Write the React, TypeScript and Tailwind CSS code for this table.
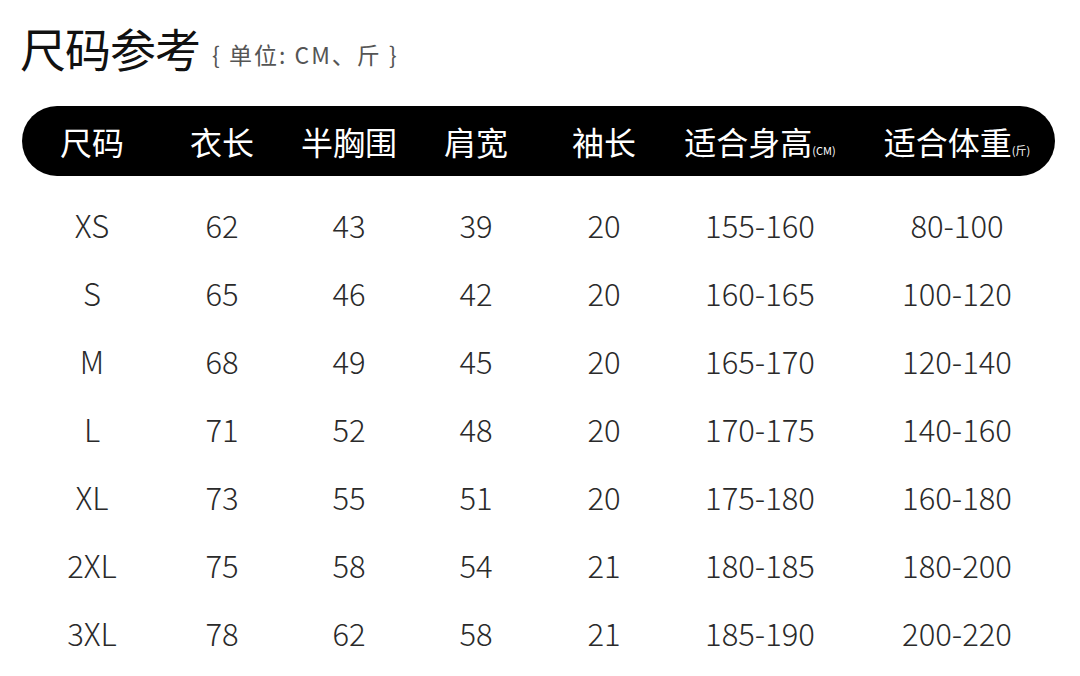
import React from 'react';

const FONT = "font-['Noto_Sans_CJK_SC','Noto_Sans',sans-serif]";

const rows: string[][] = [
  ['XS', '62', '43', '39', '20', '155-160', '80-100'],
  ['S', '65', '46', '42', '20', '160-165', '100-120'],
  ['M', '68', '49', '45', '20', '165-170', '120-140'],
  ['L', '71', '52', '48', '20', '170-175', '140-160'],
  ['XL', '73', '55', '51', '20', '175-180', '160-180'],
  ['2XL', '75', '58', '54', '21', '180-185', '180-200'],
  ['3XL', '78', '62', '58', '21', '185-190', '200-220'],
];

// column widths picked so the centres land where the reference has them
const COLS = 'grid grid-cols-[140px_120px_134px_120px_136px_176px_218px]';

const App: React.FC = () => {
  return (
    <div className={`w-[1080px] h-[676px] bg-white overflow-hidden ${FONT}`}>
      {/* Title */}
      <div className="flex items-end pl-[20px] pt-[12px] h-[76px]">
        <h1 className="text-[46px] leading-none text-[#111] tracking-[-1px] mb-[6px]">尺码参考</h1>
        <span className="ml-[12px] mb-[10px] text-[23px] leading-none text-[#555] tracking-[2px]">
          {'{'} 单位: CM、斤 {'}'}
        </span>
      </div>

      {/* Header bar */}
      <div className="ml-[22px] mt-[30px] w-[1033px] h-[70px] rounded-full bg-black">
        <div className={`${COLS} h-full items-center text-white text-[32px] leading-none`}>
          <div className="text-center">尺码</div>
          <div className="text-center">衣长</div>
          <div className="text-center">半胸围</div>
          <div className="text-center">肩宽</div>
          <div className="text-center">袖长</div>
          <div className="text-center whitespace-nowrap">
            适合身高<span className="text-[11px]">(CM)</span>
          </div>
          <div className="text-center whitespace-nowrap">
            适合体重<span className="text-[11px]">(斤)</span>
          </div>
        </div>
      </div>

      {/* Body */}
      <div className="ml-[22px] mt-[14px] flex flex-col">
        {rows.map((r) => (
          <div key={r[0]} className={`${COLS} h-[68px] items-center text-[31px] font-light text-[#2a2a2a] leading-none`}>
            {r.map((c, i) => (
              <div key={i} className="text-center">
                {c}
              </div>
            ))}
          </div>
        ))}
      </div>
    </div>
  );
};

export default App;
